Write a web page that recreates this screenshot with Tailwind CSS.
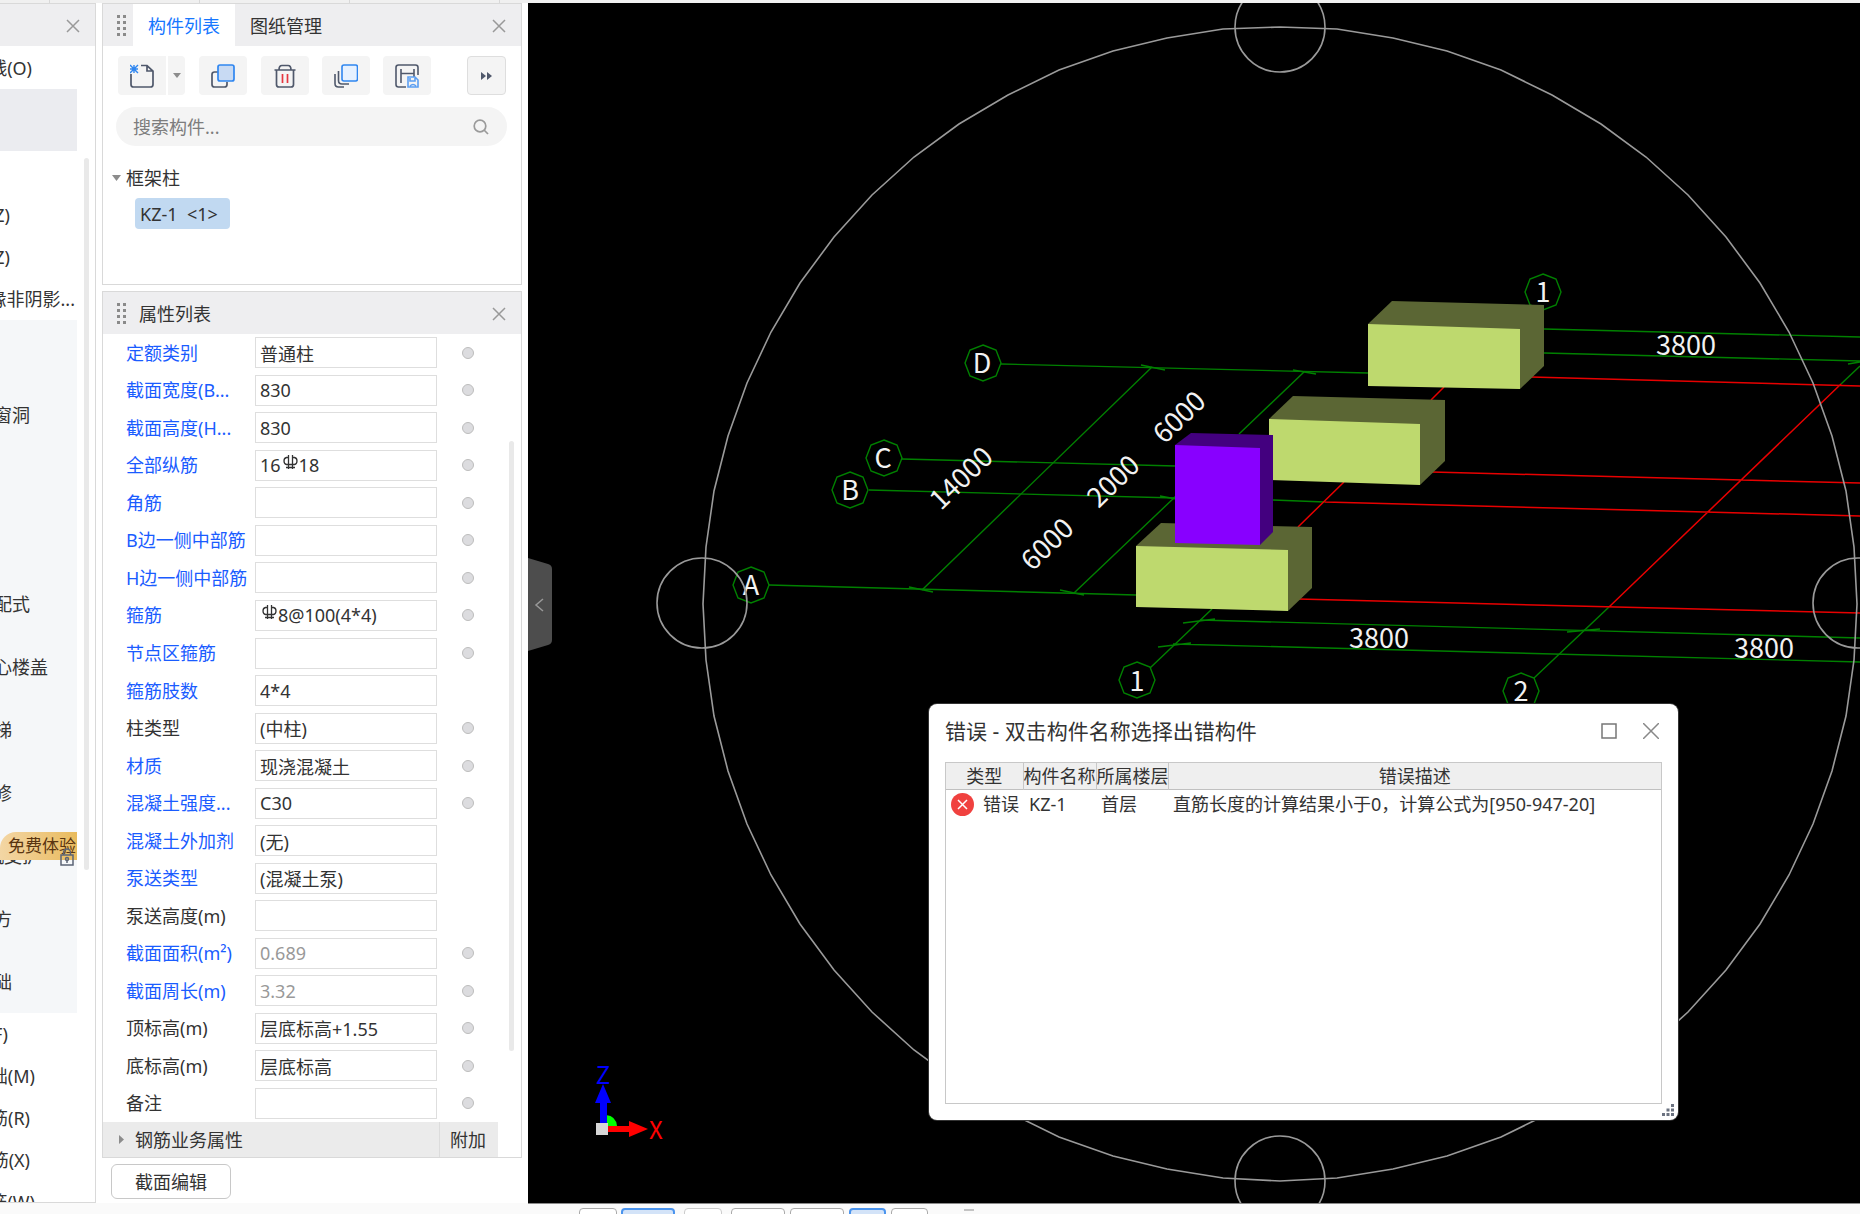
<!DOCTYPE html>
<html lang="zh-CN">
<head>
<meta charset="utf-8">
<title>构件列表</title>
<script src="https://cdn.jsdelivr.net/npm/@tailwindcss/browser@4"></script>
</head>
<body class="h-screen overflow-hidden flex flex-col bg-white font-['Noto_Sans','Noto_Sans_CJK_SC',sans-serif] text-[18px] leading-[26px] text-[#333]">
<div class="h-[3px] shrink-0 bg-[#f0f0f0] flex">
  <div class="w-[50px] border-r border-[#d8d8d8]"></div>
  <div class="w-[150px] border-r border-[#d8d8d8]"></div>
  <div class="w-[150px] border-r border-[#d8d8d8]"></div>
  <div class="w-[150px] border-r border-[#d8d8d8]"></div>
</div>

<div class="flex-1 min-h-0 flex">

  <!-- Module navigation -->
  <aside class="w-24 shrink-0 border-r border-b border-t border-[#d9d9d9] flex flex-col overflow-hidden">
    <header class="h-[42px] shrink-0 bg-[#eeeef0] flex items-center justify-end pr-[15px] pt-0.5">
      <button aria-label="关闭导航"><svg class="w-3.5 h-3.5" viewBox="0 0 14 14" fill="none" stroke="#999" stroke-width="1.5"><path d="M1 1l12 12M13 1L1 13"/></svg></button>
    </header>
    <div class="flex-1 min-h-0 flex justify-between">
      <nav class="w-[77px] overflow-hidden whitespace-nowrap">
        <a href="#" class="w-8 h-[43px] flex items-center justify-end overflow-hidden">线(O)</a>
        <div class="h-[62px] bg-[#ebecf0] mb-[43px]"></div>
        <a href="#" class="w-2.5 h-[42px] flex items-center justify-end overflow-hidden">Z)</a>
        <a href="#" class="w-2.5 h-[42px] flex items-center justify-end overflow-hidden">Z)</a>
        <a href="#" class="w-[75px] h-[42px] flex items-center justify-end overflow-hidden">缘非阴影...</a>
        <div class="bg-[#f5f7f9]">
          <div class="h-[63px]"></div>
          <a href="#" class="w-[30px] h-[63px] flex items-center justify-end overflow-hidden">窗洞</a>
          <div class="h-[126px]"></div>
          <a href="#" class="w-[30px] h-[63px] flex items-center justify-end overflow-hidden">配式</a>
          <a href="#" class="w-12 h-[63px] flex items-center justify-end overflow-hidden">心楼盖</a>
          <a href="#" class="w-3 h-[63px] flex items-center justify-end overflow-hidden">梯</a>
          <a href="#" class="w-3 h-[63px] flex items-center justify-end overflow-hidden">修</a>
          <a href="#" class="relative h-[63px] flex items-center">
            <span class="w-10 flex justify-end overflow-hidden">机支护</span>
            <span class="absolute left-0 right-0 top-2 h-7 rounded-tl-2xl bg-linear-to-r from-[#f3d6a4] to-[#e9bb5c] text-[#5a3510] text-[17px] pl-2 flex items-center overflow-hidden">免费体验</span>
            <svg class="absolute right-0.5 top-6 w-4 h-[18px]" viewBox="0 0 16 18" fill="none" stroke="#5b6475" stroke-width="1.5"><path d="M2 7h12v10H2zM4.500 7V4.500a3.500 3.500 0 0 1 7 0V7"/><circle cx="8" cy="11" r="1.500"/><path d="M8 12v3"/></svg>
          </a>
          <a href="#" class="w-3 h-[63px] flex items-center justify-end overflow-hidden">方</a>
          <a href="#" class="w-3 h-[63px] flex items-center justify-end overflow-hidden">础</a>
        </div>
        <a href="#" class="w-2 h-[42px] flex items-center justify-end overflow-hidden">F)</a>
        <a href="#" class="w-[35px] h-[42px] flex items-center justify-end overflow-hidden">础(M)</a>
        <a href="#" class="w-[30px] h-[42px] flex items-center justify-end overflow-hidden">筋(R)</a>
        <a href="#" class="w-[30px] h-[42px] flex items-center justify-end overflow-hidden">筋(X)</a>
        <a href="#" class="w-[35px] h-[42px] flex items-center justify-end overflow-hidden">筋(W)</a>
      </nav>
      <div class="w-[5px] h-[712px] mt-28 mr-1.5 rounded-full bg-[#e9e9e9]"></div>
    </div>
  </aside>

  <div class="w-[432px] shrink-0 pl-1.5 pr-1.5 flex flex-col">

    <!-- Component list -->
    <section class="h-[282px] shrink-0 border border-[#d9d9d9]">
      <header class="h-[42px] bg-[#eeeef0] flex items-center pl-[14px]">
        <svg class="w-2.5 h-[22px] mt-0.5" viewBox="0 0 10 22" fill="#8a8a8a"><path d="M0 0h3v3H0zM6 0h3v3H6zM0 6h3v3H0zM6 6h3v3H6zM0 12h3v3H0zM6 12h3v3H6zM0 18h3v3H0zM6 18h3v3H6z"/></svg>
        <button class="ml-1.5 h-full w-[102px] pt-0.5 bg-white text-[#1677ff] text-center">构件列表</button>
        <button class="ml-[15px] h-full pt-0.5">图纸管理</button>
        <button class="ml-auto mr-[15px] pt-0.5" aria-label="关闭构件列表"><svg class="w-3.5 h-3.5" viewBox="0 0 14 14" fill="none" stroke="#999" stroke-width="1.5"><path d="M1 1l12 12M13 1L1 13"/></svg></button>
      </header>
      <div class="pl-[15px] pr-[15px] pt-2.5 flex items-center">
        <button class="w-12 h-[39px] rounded-l bg-[#f4f4f4] flex items-center justify-center" aria-label="新建"><svg class="w-6 h-6" viewBox="0 0 24 24" fill="none" stroke="#4f586b" stroke-width="1.700"><path d="M1 10v10.500q0 2.500 2.500 2.500h17q2.500 0 2.500-2.500V7l-6-5.500h-6M17 1.500V7h6"/><path stroke="#2f86f0" stroke-width="1.400" d="M0 1l8 8M8 1L0 9M4 1v8M0 5h8"/></svg></button>
        <button class="ml-0.5 w-[17px] h-[39px] rounded-r bg-[#f4f4f4] flex items-center justify-center" aria-label="新建选项"><svg class="w-2 h-[5px]" viewBox="0 0 8 5" fill="#8c8c8c"><path d="M0 0h8L4 5z"/></svg></button>
        <button class="ml-[14px] w-12 h-[39px] rounded bg-[#f4f4f4] flex items-center justify-center" aria-label="复制"><svg class="w-6 h-6" viewBox="0 0 24 24" fill="none" stroke-width="1.700"><path stroke="#4f586b" d="M7 8H3.500Q1 8 1 10.500v10Q1 23 3.500 23h10q2.500 0 2.500-2.500V18"/><rect x="7" y="1" width="16" height="16" rx="2" fill="#c8daf3" stroke="#2f86f0"/></svg></button>
        <button class="ml-[14px] w-12 h-[39px] rounded bg-[#f4f4f4] flex items-center justify-center" aria-label="删除"><svg class="w-6 h-6" viewBox="0 0 24 24" fill="none" stroke="#4f586b" stroke-width="1.700"><path d="M1.500 6h21M3.500 6v14.500Q3.500 23 6 23h12q2.500 0 2.500-2.500V6M6 6q0-4.500 3-4.500h6q3 0 3 4.500"/><path stroke="#e5373f" d="M9.500 10v9M14.500 10v9"/></svg></button>
        <button class="ml-[13px] w-12 h-[39px] rounded bg-[#f4f4f4] flex items-center justify-center" aria-label="层间复制"><svg class="w-6 h-6" viewBox="0 0 24 24" fill="none" stroke-width="1.600"><path stroke="#4f586b" d="M4.500 7v9.500Q4.500 20 8 20h7M1 10v9.500Q1 23 4.500 23H10"/><rect x="8" y="1" width="15.500" height="16" rx="2" fill="#e6f1ff" stroke="#2f86f0"/></svg></button>
        <button class="ml-[13px] w-12 h-[39px] rounded bg-[#f4f4f4] flex items-center justify-center" aria-label="存档"><svg class="w-6 h-6" viewBox="0 0 24 24" fill="none" stroke-width="1.600"><path stroke="#4f586b" d="M11 23H3.500Q1 23 1 20.500v-17Q1 1 3.500 1h17Q23 1 23 3.500V11M6 5v14M6 9.500h13M19 5v8"/><path stroke="#5a9ef2" d="M13 13h7l3 3v7H13zM15 14v3h5v-3M15 22q3-3 6 0"/></svg></button>
        <button class="ml-auto w-[39px] h-[39px] rounded border border-[#dedede] bg-[#f4f4f4] flex items-center justify-center" aria-label="更多"><svg class="w-[11px] h-2" viewBox="0 0 11 8" fill="#4f586b"><path d="M0 0l5 4-5 4zM6 0l5 4-5 4z"/></svg></button>
      </div>
      <label class="mt-3 ml-[13px] mr-[14px] h-[39px] rounded-full bg-[#f4f4f4] flex items-center pl-[17px] pr-[18px]">
        <input aria-label="搜索构件" placeholder="搜索构件..." class="flex-1 min-w-0 bg-transparent outline-none placeholder:text-[#7d7d7d]">
        <svg class="w-4 h-4" viewBox="0 0 16 16" fill="none" stroke="#9a9a9a" stroke-width="1.700"><circle cx="7" cy="7" r="5.800"/><path d="M11 11l4 4"/></svg>
      </label>
      <div class="mt-[19px] ml-[9px] flex items-center gap-[5px]"><svg class="w-[9px] h-1.5" viewBox="0 0 9 6" fill="#8c8c8c"><path d="M0 0h9L4.500 6z"/></svg><span>框架柱</span></div>
      <button class="mt-[7px] ml-8 h-[31px] w-[95px] whitespace-pre rounded bg-[#c1d9f1] text-left pl-[5px]">KZ-1  &lt;1&gt;</button>
    </section>

    <!-- Property list -->
    <section class="mt-1.5 flex-1 min-h-0 border border-[#d9d9d9] flex flex-col">
      <header class="h-[42px] shrink-0 bg-[#eeeef0] flex items-center pl-[14px] pt-0.5">
        <svg class="w-2.5 h-[22px]" viewBox="0 0 10 22" fill="#8a8a8a"><path d="M0 0h3v3H0zM6 0h3v3H6zM0 6h3v3H0zM6 6h3v3H6zM0 12h3v3H0zM6 12h3v3H6zM0 18h3v3H0zM6 18h3v3H6z"/></svg>
        <h2 class="ml-3">属性列表</h2>
        <button class="ml-auto mr-[15px]" aria-label="关闭属性列表"><svg class="w-3.5 h-3.5" viewBox="0 0 14 14" fill="none" stroke="#999" stroke-width="1.5"><path d="M1 1l12 12M13 1L1 13"/></svg></button>
      </header>
      <div class="flex-1 min-h-0 flex">
        <div class="w-[395px] flex flex-col">
          <div id="props" class="flex-1 min-h-0 flex flex-col pl-[23px]"></div>
          <div class="h-[35px] shrink-0 bg-[#ebebeb] flex items-center">
            <button class="flex-1 h-full flex items-center gap-[11px] pl-4"><svg class="w-[5px] h-[9px]" viewBox="0 0 5 9" fill="#8c8c8c"><path d="M0 0l5 4.500L0 9z"/></svg>钢筋业务属性</button>
            <div class="w-[59px] h-full border-l border-[#dcdcdc] flex items-center pl-2.5">附加</div>
          </div>
        </div>
        <div class="ml-[11px] mt-[107px] w-[5px] h-[610px] rounded-full bg-[#e9e9e9]"></div>
      </div>
    </section>
    <div class="h-[45px] shrink-0 pt-1.5 pl-[9px]">
      <button class="w-[120px] h-[35px] rounded-md border border-[#c8c8c8] bg-white">截面编辑</button>
    </div>
  </div>

  <!-- 3D view -->
  <main class="relative flex-1 min-w-0 bg-black overflow-hidden">
    <svg class="block w-full h-full font-['Noto_Sans_CJK_SC',sans-serif]" viewBox="528 3 1332 1200" preserveAspectRatio="xMinYMin slice" fill="none">
      <g stroke="#008000" stroke-width="1.400">
        <path d="M1001 364L1368 373M902 459L1176 466M869 490L1176 498M769 585L1136 595M1273 500L1325 502"/>
        <path d="M1152 367L922 590M1074 593L1176 496M1239 434L1304 372"/>
        <path d="M1141 365L1165 370M909 587L933 592M1060 590L1084 595M1160 496L1176 499M1293 370L1316 374"/>
        <path d="M1150 668L1212 609M1534 678L1609 607M1841 384L1860 366"/>
        <path d="M1200 620L1860 638M1173 644L1860 662M1183 623L1215 619M1158 647L1191 643M1567 632L1600 629"/>
        <path d="M1544 329L1860 337M1544 353L1860 361M1848 364L1860 362"/>
        <g>
          <path d="M983 345l13 5 5 13-5 13-13 5-13-5-5-13 5-13z"/>
          <path d="M884 440l13 5 5 13-5 13-13 5-13-5-5-13 5-13z"/>
          <path d="M850 472l13 5 5 13-5 13-13 5-13-5-5-13 5-13z"/>
          <path d="M751 567l13 5 5 13-5 13-13 5-13-5-5-13 5-13z"/>
          <path d="M1137 662l13 5 5 13-5 13-13 5-13-5-5-13 5-13z"/>
          <path d="M1543 274l13 5 5 13-5 13-13 5-13-5-5-13 5-13z"/>
          <path d="M1521 673l13 5 5 13-5 13-13 5-13-5-5-13 5-13z"/>
        </g>
      </g>
      <path stroke="#e80000" stroke-width="1.500" d="M1531 377L1860 386M1432 472L1860 483M1325 502L1860 516M1298 599L1860 613M1444 387L1431 400M1344 482L1298 527M1609 607L1841 384"/>

      <g>
        <path fill="#5b6634" d="M1368 324L1392 301L1544 305V366L1520 389z"/>
        <path fill="#bed96e" d="M1368 324L1520 329V389L1368 386z"/>
        <path fill="#5b6634" d="M1269 419L1293 396L1445 400V461L1420 485z"/>
        <path fill="#bed96e" d="M1269 419L1420 424V485L1269 480z"/>
        <path fill="#5b6634" d="M1136 546L1161 523L1312 527V588L1288 611z"/>
        <path fill="#bed96e" d="M1136 546L1288 550V611L1136 607z"/>
        <path fill="#43007f" d="M1175 445L1191 433L1273 435V532L1260 545z"/>
        <path fill="#8800ff" d="M1175 445L1260 448V545L1175 543z"/>
      </g>

      <g fill="#f2f2f2" font-size="27" text-anchor="middle">
        <text x="982" y="373">D</text>
        <text x="883" y="468">C</text>
        <text x="850" y="500">B</text>
        <text x="751" y="595">A</text>
        <text x="1137" y="691">1</text>
        <text x="1543" y="302">1</text>
        <text x="1521" y="701">2</text>
        <text x="1379" y="648">3800</text>
        <text x="1764" y="658">3800</text>
        <text x="1686" y="355">3800</text>
        <text transform="translate(1179 417) rotate(-44)" y="10">6000</text>
        <text transform="translate(961 478) rotate(-44)" y="10">14000</text>
        <text transform="translate(1113 481) rotate(-44)" y="10">2000</text>
        <text transform="translate(1047 544) rotate(-44)" y="10">6000</text>
      </g>

      <g stroke="#9a9a9a" stroke-width="1.600">
        <polygon id="orbit"/>
        <circle cx="702" cy="603" r="45"/>
        <circle cx="1858" cy="603" r="45"/>
        <circle cx="1280" cy="27" r="45"/>
        <circle cx="1280" cy="1181" r="45"/>
      </g>

      <g>
        <path fill="#0f0" d="M606 1115q10 1 11 11h-11z"/>
        <path fill="#00f" d="M603 1084l8 19h-4v21h-7v-21h-5z"/>
        <path fill="#f00" d="M607 1126h22v-5l19 8-19 8v-5h-22z"/>
        <path fill="#d6d6d6" d="M596 1123h12v12h-12z"/>
        <g font-size="24" text-anchor="middle"><text fill="#00f" x="603" y="1084">Z</text><text fill="#f00" x="656" y="1139">X</text></g>
      </g>
    </svg>

    <button class="absolute left-0 top-[555px] w-6 h-[94px]" aria-label="收起面板"><svg class="w-6 h-[94px]" viewBox="0 0 24 94" fill="none"><path fill="#4d4d4d" d="M0 0l20 6q4 1 4 5v71q0 4-4 5L0 93z"/><path stroke="#999" stroke-width="1.500" d="M15 41l-7 6 7 6"/></svg></button>

    <!-- Error dialog -->
    <div role="dialog" aria-labelledby="dlg-title" class="absolute right-[182px] bottom-[83px] w-[749px] h-[416px] rounded-lg bg-white ring-1 ring-[#333] flex flex-col px-4 pb-4">
      <header class="h-[58px] pb-1 shrink-0 flex items-center">
        <h2 id="dlg-title" class="text-[21px] leading-7">错误 - 双击构件名称选择出错构件</h2>
        <button class="ml-auto" aria-label="最大化"><svg class="w-4 h-4" viewBox="0 0 16 16" fill="none" stroke="#777" stroke-width="1.500"><path d="M1 1h14v14H1z"/></svg></button>
        <button class="ml-[26px] mr-[3px]" aria-label="关闭"><svg class="w-4 h-4" viewBox="0 0 16 16" fill="none" stroke="#888" stroke-width="1.500"><path d="M0 0l16 16M16 0L0 16"/></svg></button>
      </header>
      <div class="flex-1 border border-[#c8c8c8]">
        <table class="w-full table-fixed border-collapse">
          <colgroup><col class="w-[77px]"><col class="w-[73px]"><col class="w-[72px]"><col></colgroup>
          <thead><tr class="h-[26px] bg-[#efefef] border-b border-[#c0c0c0] whitespace-nowrap leading-6">
            <th class="font-normal p-0 border-r border-[#c8c8c8]">类型</th><th class="font-normal p-0 border-r border-[#c8c8c8]">构件名称</th><th class="font-normal p-0 border-r border-[#c8c8c8]">所属楼层</th><th class="font-normal p-0">错误描述</th>
          </tr></thead>
          <tbody><tr class="h-[30px] whitespace-nowrap">
            <td class="p-0"><span class="flex items-center gap-[9px] pl-[5px]"><svg class="w-[23px] h-[23px] shrink-0" viewBox="0 0 23 23"><circle cx="11.500" cy="11.500" r="11.500" fill="#f0413f"/><path stroke="#fff" stroke-width="1.500" d="M7 7l9 9M16 7l-9 9"/></svg>错误</span></td>
            <td class="p-0 pl-1.5">KZ-1</td><td class="p-0 pl-[5px]">首层</td><td class="p-0 pl-[5px]">直筋长度的计算结果小于0，计算公式为[950-947-20]</td>
          </tr></tbody>
        </table>
      </div>
      <svg class="absolute right-1 bottom-1 w-3 h-3" viewBox="0 0 12 12" fill="#6b7280"><path d="M9 0h3v3H9zM4.500 4.500h3v3h-3zM9 4.500h3v3H9zM0 9h3v3H0zM4.500 9h3v3h-3zM9 9h3v3H9z"/></svg>
    </div>
  </main>
</div>

<!-- Status toolbar -->
<footer class="h-[11px] shrink-0 overflow-hidden bg-[#fafafa] flex">
  <div class="w-[528px] shrink-0"></div>
  <div class="flex-1 border-t border-[#8a8a8a] pt-1 pl-[51px] flex items-start">
    <button aria-label="视图" class="w-[38px] h-8 shrink-0 rounded border border-[#aaa] bg-white"></button>
    <button aria-label="正交" class="ml-1 w-[54px] h-8 shrink-0 rounded border-2 border-[#4a94ee] bg-[#d3e3f8]"></button>
    <button aria-label="对象" class="ml-[9px] w-[38px] h-8 shrink-0 rounded border border-[#ccc] bg-white"></button>
    <button aria-label="捕捉" class="ml-[9px] w-[54px] h-8 shrink-0 rounded border border-[#aaa] bg-white"></button>
    <button aria-label="选择" class="ml-[5px] w-[54px] h-8 shrink-0 rounded border border-[#aaa] bg-white"></button>
    <button aria-label="交点" class="ml-[5px] w-[37px] h-8 shrink-0 rounded border-2 border-[#4a94ee] bg-[#d3e3f8]"></button>
    <button aria-label="垂点" class="ml-[5px] w-[37px] h-8 shrink-0 rounded border border-[#aaa] bg-white"></button>
    <div class="ml-[36px] mt-[1px] w-2.5 h-8 shrink-0 border-t-2 border-[#c4c4c4]"></div>
  </div>
</footer>

<script>
  // label, value, colour (b = blue public property, k = black private one), has status dot, read-only
  const rows = [
    ['定额类别', '普通柱', 'b', 1], ['截面宽度(B...', '830', 'b', 1], ['截面高度(H...', '830', 'b', 1],
    ['全部纵筋', '16#18', 'b', 1], ['角筋', '', 'b', 1], ['B边一侧中部筋', '', 'b', 1], ['H边一侧中部筋', '', 'b', 1],
    ['箍筋', '#8@100(4*4)', 'b', 1], ['节点区箍筋', '', 'b', 1], ['箍筋肢数', '4*4', 'b', 0], ['柱类型', '(中柱)', 'k', 1],
    ['材质', '现浇混凝土', 'b', 1], ['混凝土强度...', 'C30', 'b', 1], ['混凝土外加剂', '(无)', 'b', 0],
    ['泵送类型', '(混凝土泵)', 'b', 0], ['泵送高度(m)', '', 'k', 0], ['截面面积(m²)', '0.689', 'b', 1, 1],
    ['截面周长(m)', '3.32', 'b', 1, 1], ['顶标高(m)', '层底标高+1.55', 'k', 1], ['底标高(m)', '层底标高', 'k', 1], ['备注', '', 'k', 1]
  ];
  // HRB400 bar symbol, typed as # in the values above
  const bar = '<svg class="inline-block ml-0.5 mr-px w-[15px] h-[15px] mb-1.5" viewBox="0 0 15 15" fill="none" stroke="#333" stroke-width="1.300"><path d="M5 2.500H3.500Q1 3 1 6t2.500 3.500h8Q14 9 14 6t-2.500-3.500H10M5.500 0v14M9.500 0v14M3 12.500h9"/></svg>';
  const box = 'w-[182px] h-[31px] border border-[#dedede] bg-white pl-1 outline-none';
  document.getElementById('props').innerHTML = rows.map(([l, v, c, dot, ro], i) => {
    const field = v.includes('#')
      ? `<div id="f${i}" role="textbox" contenteditable="true" aria-label="${l}" class="${box} flex items-center">${v.replace('#', bar)}</div>`
      : `<input id="f${i}" value="${v}" ${ro ? 'readonly' : ''} class="${box} ${ro ? 'text-[#999]' : ''}">`;
    return `<div class="flex-1 min-h-0 flex items-center">
      <label for="f${i}" class="w-[129px] shrink-0 whitespace-nowrap ${c === 'b' ? 'text-[#1a5cff]' : ''}">${l}</label>${field}
      ${dot ? '<span class="ml-[25px] w-3 h-3 rounded-full border border-[#bdbdbd] bg-[#dcdcdf]"></span>' : ''}</div>`;
  }).join('');

  // Orbit ring: 64 straight segments
  document.getElementById('orbit').setAttribute('points', Array.from({length: 64}, (_, k) => {
    const a = k * Math.PI / 32;
    return (1280 + 577 * Math.cos(a)).toFixed(0) + ',' + (603.500 + 577 * Math.sin(a)).toFixed(0);
  }).join(' '));
</script>
</body>
</html>
